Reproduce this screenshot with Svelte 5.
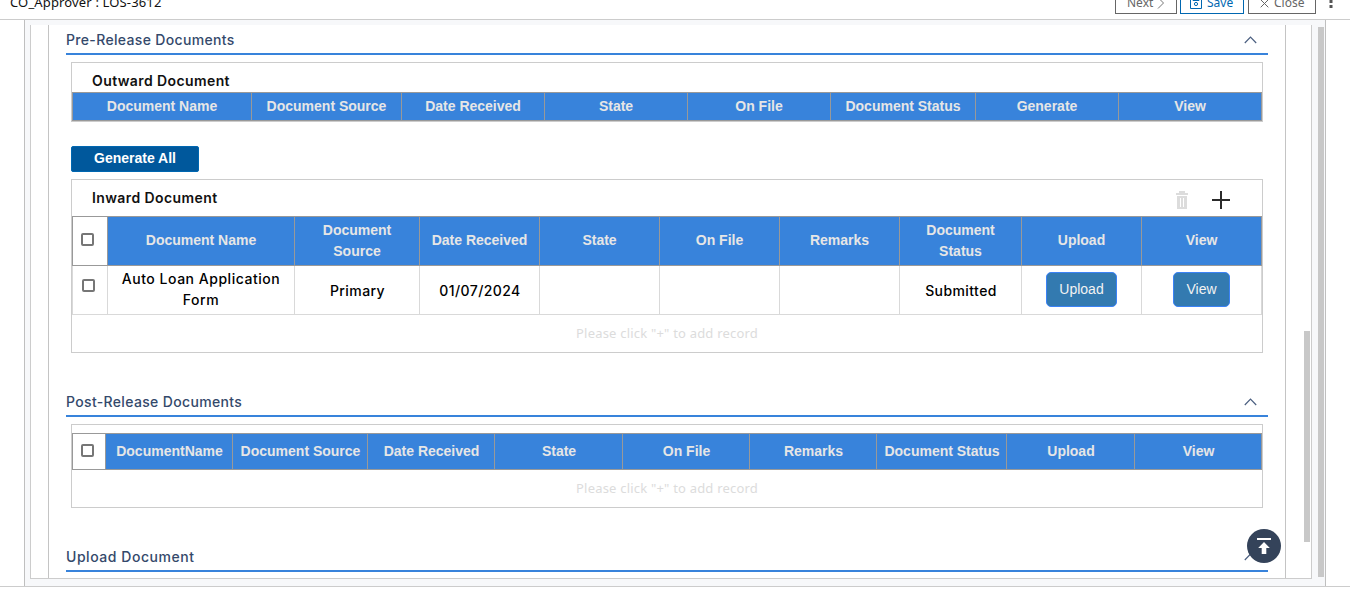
<script>
  const outward = {
    cols: '179px 150px 143px 143px 143px 145px 143px 143px',
    heads: ['Document Name', 'Document Source', 'Date Received', 'State', 'On File', 'Document Status', 'Generate', 'View']
  };
  const inward = {
    cols: '35px 187px 125px 120px 120px 120px 120px 122px 120px 120px',
    heads: ['Document Name', 'Document Source', 'Date Received', 'State', 'On File', 'Remarks', 'Document Status', 'Upload', 'View'],
    row: ['Auto Loan Application Form', 'Primary', '01/07/2024', '', '', '', 'Submitted']
  };
  const post = {
    cols: '33px 127px 135px 127px 128px 127px 127px 130px 128px 127px',
    heads: ['DocumentName', 'Document Source', 'Date Received', 'State', 'On File', 'Remarks', 'Document Status', 'Upload', 'View']
  };
</script>

{#snippet heading(text)}
  <div class="heading">
    <h2>{text}</h2>
    <svg width="13" height="8" viewBox="0 0 13 8"><path d="M.8 7 L6.5 1.2 L12.2 7" fill="none" stroke="#4b5f80" stroke-width="1.2" /></svg>
  </div>
{/snippet}

<div class="page">
  <header>
    <span class="title">CO_Approver : LOS-3612</span>
    <div class="actions">
      <button class="act next"><span>Next</span>
        <svg width="8" height="12" viewBox="0 0 8 12"><path d="M1 .5 L6.5 6 L1 11.5" fill="none" stroke="#777" /></svg>
      </button>
      <button class="act save">
        <svg width="12" height="12" viewBox="0 0 12 12"><path d="M.5 .5H11.5V11.5H.5Z M3 .5V3.5H9V.5" fill="none" stroke="#0067b1" /><circle cx="6" cy="7" r="1.6" fill="none" stroke="#0067b1" /></svg>
        <span>Save</span>
      </button>
      <button class="act close">
        <svg width="9" height="9" viewBox="0 0 9 9"><path d="M.7 .7 L8.3 8.3 M8.3 .7 L.7 8.3" fill="none" stroke="#666" /></svg>
        <span>Close</span>
      </button>
      <svg class="dots" width="4" height="14" viewBox="0 0 4 14"><path d="M.5 0h3v3h-3z M.5 5h3v3h-3z M.5 10h3v3h-3z" fill="#555" /></svg>
    </div>
  </header>

  <main>
    <div class="panel">
      <div class="content">
        <section class="pre">
          {@render heading('Pre-Release Documents')}
          <div class="box outward">
            <h3>Outward Document</h3>
            <div class="table head" style="grid-template-columns: {outward.cols}">
              {#each outward.heads as h}<div class="cell">{h}</div>{/each}
            </div>
          </div>
          <button class="generate">Generate All</button>
          <div class="box inward">
            <div class="toolbar">
              <h3>Inward Document</h3>
              <svg class="trash" width="12" height="18" viewBox="0 0 12 18"><path fill="#dcdcdc" fill-rule="evenodd" d="M3 0H9V2H12V4H0V2H3Z M1 5H11V18H1Z M4 7V16H5V7Z M7 7V16H8V7Z" /></svg>
              <svg width="18" height="18" viewBox="0 0 18 18"><path fill="#2b2b2b" d="M8 0h2v8h8v2h-8v8H8v-8H0V8h8z" /></svg>
            </div>
            <div class="table head" style="grid-template-columns: {inward.cols}">
              <div class="cell pick"><i class="check"></i></div>
              {#each inward.heads as h}<div class="cell">{h}</div>{/each}
            </div>
            <div class="table record" style="grid-template-columns: {inward.cols}">
              <div class="cell pick"><i class="check"></i></div>
              {#each inward.row as v}<div class="cell" class:single={v !== '' && v.length < 15}>{v}</div>{/each}
              <div class="cell action"><button class="blue upload">Upload</button></div>
              <div class="cell action"><button class="blue view">View</button></div>
            </div>
            <p class="empty">Please click "+" to add record</p>
          </div>
        </section>

        <section class="post">
          {@render heading('Post-Release Documents')}
          <div class="box">
            <div class="table head" style="grid-template-columns: {post.cols}">
              <div class="cell pick"><i class="check"></i></div>
              {#each post.heads as h}<div class="cell">{h}</div>{/each}
            </div>
            <p class="empty">Please click "+" to add record</p>
          </div>
        </section>

        <section class="upl">
          {@render heading('Upload Document')}
        </section>
      </div>
      <div class="thumb inner"></div>
    </div>
    <div class="thumb outer"></div>
  </main>

  <button class="totop" aria-label="Back to top">
    <svg width="14" height="17" viewBox="0 0 14 17"><path fill="#fff" d="M0 0H14V2H0Z M7 4L12.8 10H9.3V16H4.7V10H1.2Z" /></svg>
  </button>
</div>

<style>
  :global(body) { margin: 0; background: #fff; overflow: hidden; }
  * { box-sizing: border-box; }
  h2, h3, p { margin: 0; }
  svg { display: block; flex: none; }
  button { font: inherit; padding: 0; margin: 0; }
  .page { position: relative; width: 1350px; height: 602px; overflow: hidden; background: #fff; }
  .page::after { content: ""; display: block; height: 1px; background: #ccc; }

  header { height: 20px; border-bottom: 1px solid #ccc; display: flex; justify-content: space-between; align-items: flex-end; padding: 0 17px 5px 10px; font-family: "Noto Sans", sans-serif; overflow: hidden; }
  .title { font-size: 13px; line-height: 18px; height: 21px; color: #111; white-space: nowrap; letter-spacing: 0.15px; }
  .actions { display: flex; align-items: flex-end; height: 26px; }
  .act { display: flex; align-items: center; height: 26px; background: #fff; border: 1px solid #666; font-size: 12px; line-height: 18px; color: #666; padding-top: 4px; }
  .next { width: 62px; gap: 4px; padding-left: 11px; margin-right: 3px; }
  .save { width: 64px; gap: 5px; padding-left: 9px; border-color: #0067b1; color: #0067b1; margin-right: 4px; }
  .close { width: 68px; gap: 5px; padding-left: 11px; margin-right: 13px; }
  .dots { margin-bottom: 5px; }

  main { display: flex; width: 1302px; height: 566px; margin-left: 24px; padding: 5px 1px 7px 5px; background: #f7f8fa; border: 1px solid #bfbfbf; border-width: 0 1px; }
  .panel { display: flex; width: 1282px; height: 554px; background: #fff; border: 1px solid #ccc; border-top: 0; }
  .content { width: 1238px; height: 553px; margin-left: 17px; padding-left: 17px; border: 1px solid #c4c4c4; border-width: 0 1px; overflow: hidden; }
  .thumb { background: #c8c8c8; width: 6px; flex: none; }
  .inner { height: 211px; margin: 306px 0 0 18px; }
  .outer { height: 550px; margin: 2px 0 0 6px; }

  .heading { width: 1202px; height: 30px; border-bottom: 2px solid #3883db; display: flex; justify-content: space-between; padding-right: 11px; }
  h2 { font: 500 14px/30px Inter, sans-serif; color: #34496b; letter-spacing: 0.34px; }
  .upl h2 { letter-spacing: 0.55px; }
  .heading svg { margin-top: 11px; }
  h3 { font: 600 14px/18px Inter, sans-serif; color: #111; letter-spacing: 0.4px; padding-left: 20px; }
  .post, .upl { margin-top: 34px; }

  .box { width: 1192px; border: 1px solid #ccc; margin: 7px 0 0 5px; }
  .outward { height: 60px; }
  .outward h3 { height: 29px; padding-top: 9px; }
  .table { display: grid; border: 1px solid #999; border-right: 0; font: 700 14px/21px "Liberation Sans", Arial, sans-serif; color: #e6e6e6; }
  .cell { display: flex; align-items: center; justify-content: center; text-align: center; border-right: 1px solid #999; }
  .head .cell { background: #3883db; padding: 0 5px; }
  .outward .cell { height: 27px; padding-bottom: 1px; }
  .generate { display: block; width: 128px; height: 26px; margin: 24px 0 0 5px; padding-bottom: 2px; border: 1px solid #0067b1; border-radius: 2px; background: #00589c; color: #fff; font: 700 14px/20px "Liberation Sans", Arial, sans-serif; }
  .inward { height: 174px; }
  .toolbar { display: flex; height: 36px; padding: 9px 32px 0 0; }
  .toolbar h3 { flex: 1; }
  .toolbar svg { margin-top: 2px; }
  .toolbar .trash { margin-right: 24px; }
  .inward .head { height: 50px; }
  .inward .head .cell { padding-bottom: 1px; }
  .check { width: 13px; height: 13px; border: 2px solid #767676; border-radius: 2px; background: #fff; margin-right: 5px; }
  .record { height: 49px; border-color: #d9d9d9; border-top: 0; font: 500 14px/21px Inter, sans-serif; color: #000; }
  .record .cell { border-color: #d9d9d9; padding: 0 8px 2px; letter-spacing: 0.52px; }
  .record .single { padding: 2px 8px 1px 9px; letter-spacing: 0.42px; }
  .record .cell.pick { padding: 0 0 9px; }
  .record .check { margin-right: 3px; }
  .blue { letter-spacing: 0; height: 35px; border: 1px solid #3b82f6; border-radius: 5px; background: #337ab0; color: #f2f2f2; font: 400 14px/20px "Liberation Sans", Arial, sans-serif; }
  .upload { width: 71px; flex: none; }
  .view { width: 57px; }
  .empty { font: 400 13px/37px "Noto Sans", sans-serif; text-align: center; color: #dcdcdc; letter-spacing: 0.2px; }
  .post .box { height: 84px; padding-top: 8px; }
  .post .head { height: 37px; }
  .post .cell { padding: 0 0 0 1px; white-space: nowrap; }
  .head .cell.pick { background: #fff; padding: 0 0 2px; }
  .inward .head .cell.pick { padding-bottom: 3px; }
  .post .check { margin-right: 4px; }

  .totop { position: absolute; left: 1247px; top: 529px; width: 34px; height: 34px; border: 0; border-radius: 50%; background: #34435a; display: flex; align-items: center; justify-content: center; }
</style>
